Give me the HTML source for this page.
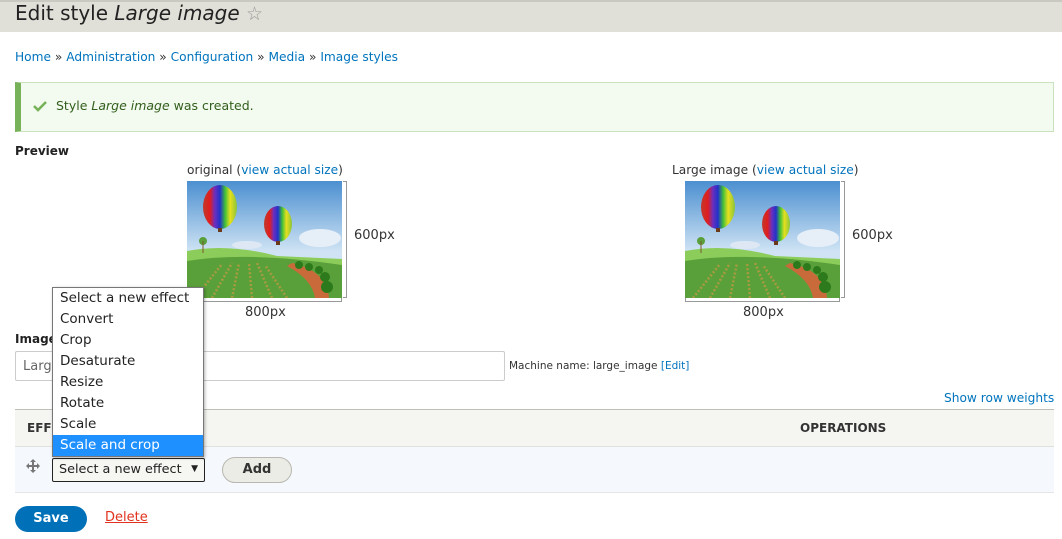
<!DOCTYPE html>
<html><head><meta charset="utf-8">
<style>
*{box-sizing:border-box;margin:0;padding:0}
body{width:1062px;height:539px;overflow:hidden;background:#fff;font-family:"DejaVu Sans","Liberation Sans",sans-serif;font-size:13px;color:#222;position:relative}
.a{position:absolute}
a,.lk{color:#0074bd;text-decoration:none}
#hdr{left:0;top:0;width:1062px;height:32px;background:#e0dfd8;border-top:2px solid #c9c9c2}
#hdr h1{position:absolute;left:15px;top:-1px;font-family:"DejaVu Sans","Liberation Sans",sans-serif;font-weight:normal;font-size:20px;color:#222;letter-spacing:0}
.img{position:absolute;width:155px;height:117px}
.dd div{height:21px;line-height:21px;padding-left:7px;font-size:13.5px;color:#222}
</style></head><body>
<div id="hdr" class="a"><h1>Edit style <i>Large image</i> <span style="color:#999;font-size:19px">☆</span></h1></div>
<div class="a" style="left:15px;top:50px;font-size:12.2px;color:#333"><a>Home</a> » <a>Administration</a> » <a>Configuration</a> » <a>Media</a> » <a>Image styles</a></div>
<div class="a" style="left:15px;top:82px;width:1039px;height:50px;background:#f3faef;border:1px solid #c9e1bd;border-left:6px solid #77b259"></div>
<svg class="a" style="left:33px;top:100px" width="14" height="12" viewBox="0 0 14 12"><path d="M1 6 L5 10 L13 2" stroke="#77b259" stroke-width="2.6" fill="none"/></svg>
<div class="a" style="left:56px;top:98px;font-size:12.5px;color:#325e1c">Style <i>Large image</i> was created.</div>
<div class="a" style="left:15px;top:144px;font-weight:bold;font-size:12px">Preview</div>

<div class="a" style="left:187px;top:163px;font-size:12.2px;color:#333">original (<a>view actual size</a>)</div>
<div class="a" style="left:672px;top:163px;font-size:12.2px;color:#333">Large image (<a>view actual size</a>)</div>

<svg width="0" height="0" style="position:absolute"><defs>
<linearGradient id="sky" x1="0" y1="0" x2="0" y2="1"><stop offset="0" stop-color="#4b8fd0"/><stop offset="0.6" stop-color="#cfe3f4"/></linearGradient>
<linearGradient id="bal" x1="0" y1="0" x2="1" y2="0"><stop offset="0" stop-color="#c0392b"/><stop offset="0.2" stop-color="#e01e1e"/><stop offset="0.35" stop-color="#6a2fc0"/><stop offset="0.5" stop-color="#2232c8"/><stop offset="0.65" stop-color="#3fbf3a"/><stop offset="0.8" stop-color="#e6e01e"/><stop offset="1" stop-color="#8ac43a"/></linearGradient>
<symbol id="pic" viewBox="0 0 155 117">
<rect width="155" height="117" fill="url(#sky)"/>
<ellipse cx="133" cy="57" rx="21" ry="9" fill="#e6eff8"/>
<ellipse cx="60" cy="64" rx="15" ry="4" fill="#dde8f4"/>
<path d="M0 70 Q40 62 90 75 L155 78 L155 117 L0 117Z" fill="#8ccc5a"/>
<path d="M0 80 Q60 70 155 84 L155 117 L0 117Z" fill="#5aa03a"/>
<path d="M105 82 Q140 90 142 117 L128 117 Q125 98 100 85Z" fill="#c96a3a"/>
<g fill="#2d7a1c"><circle cx="112" cy="84" r="4"/><circle cx="122" cy="86" r="4"/><circle cx="132" cy="89" r="4"/><circle cx="138" cy="96" r="5"/><circle cx="140" cy="106" r="6"/></g>
<g stroke="#a89a40" stroke-width="2.5" stroke-dasharray="2 2"><path d="M8 117 L35 83 M25 117 L45 82 M45 117 L52 82 M65 117 L62 82 M85 117 L70 82 M100 117 L78 84"/></g>
<ellipse cx="33" cy="26" rx="17" ry="22" fill="url(#bal)"/>
<rect x="31" y="47" width="4" height="4" fill="#6b3a1a"/>
<ellipse cx="91" cy="43" rx="14" ry="18" fill="url(#bal)"/>
<rect x="89" y="60" width="4" height="4" fill="#6b3a1a"/>
<circle cx="16" cy="60" r="4" fill="#5aa03a"/>
<line x1="16" y1="60" x2="16" y2="72" stroke="#7a5a2a"/>
</symbol></defs></svg>
<svg class="img" style="left:187px;top:181px"><use href="#pic" width="155" height="117"/></svg>
<svg class="img" style="left:685px;top:181px"><use href="#pic" width="155" height="117"/></svg>
<div class="a" style="left:343px;top:181px;width:4px;height:117px;border:1px solid #999;border-left:none"></div>
<div class="a" style="left:187px;top:298px;width:155px;height:4px;border:1px solid #999;border-top:none"></div>
<div class="a" style="left:841px;top:181px;width:4px;height:117px;border:1px solid #999;border-left:none"></div>
<div class="a" style="left:685px;top:298px;width:155px;height:4px;border:1px solid #999;border-top:none"></div>
<div class="a" style="left:354px;top:228px;font-size:13px;color:#333">600px</div>
<div class="a" style="left:852px;top:228px;font-size:13px;color:#333">600px</div>
<div class="a" style="left:245px;top:305px;font-size:13px;color:#333">800px</div>
<div class="a" style="left:743px;top:305px;font-size:13px;color:#333">800px</div>

<div class="a" style="left:15px;top:332px;font-weight:bold;font-size:12px">Image style name</div>
<div class="a" style="left:15px;top:351px;width:490px;height:30px;border:1px solid #ccc;border-radius:2px;padding:7px 7px;color:#666;font-size:13px">Large image</div>
<div class="a" style="left:509px;top:360px;font-size:10.5px;color:#333">Machine name: large_image <a>[Edit]</a></div>
<div class="a" style="left:944px;top:391px;font-size:12.2px"><a>Show row weights</a></div>
<div class="a" style="left:15px;top:409px;width:1039px;height:38px;background:#f5f5f2;border-top:1px solid #bfbfba;border-bottom:1px solid #e0e0dc"></div>
<div class="a" style="left:27px;top:421px;font-weight:bold;font-size:12px;color:#333">EFFECT</div>
<div class="a" style="left:800px;top:421px;font-weight:bold;font-size:12px;color:#333">OPERATIONS</div>
<div class="a" style="left:15px;top:447px;width:1039px;height:46px;background:#f5f9fd;border-bottom:1px solid #e6e6e6"></div>
<svg class="a" style="left:26px;top:459px" width="14" height="14" viewBox="0 0 14 14"><path d="M7 0 L10 3 H8 V6 H11 V4 L14 7 L11 10 V8 H8 V11 H10 L7 14 L4 11 H6 V8 H3 V10 L0 7 L3 4 V6 H6 V3 H4Z" fill="#777"/></svg>
<div class="a" style="left:52px;top:458px;width:153px;height:24px;border:1.5px solid #222;border-radius:2px;background:#f6f6f2;padding-left:6px;line-height:21px;font-size:12.8px;color:#222;white-space:nowrap">Select a new effect<span style="position:absolute;right:6px;top:0;font-size:9px">▼</span></div>
<div class="a" style="left:222px;top:457px;width:70px;height:26px;border:1px solid #b8b8b0;border-radius:14px;background:#ecece6;text-align:center;line-height:24px;font-weight:bold;font-size:13px;color:#333">Add</div>
<div class="a dd" style="left:52px;top:287px;width:152px;height:170px;background:#fff;border:1px solid #777;box-shadow:1px 1px 3px rgba(0,0,0,.3)">
<div>Select a new effect</div><div>Convert</div><div>Crop</div><div>Desaturate</div><div>Resize</div><div>Rotate</div><div>Scale</div><div style="background:#1e90ff;color:#fff">Scale and crop</div></div>
<div class="a" style="left:15px;top:506px;width:72px;height:26px;background:#0071b8;border-radius:14px;color:#fff;font-weight:bold;text-align:center;line-height:26px;font-size:13px">Save</div>
<div class="a" style="left:105px;top:510px;color:#e0321e;text-decoration:underline;font-size:13px">Delete</div>
</body></html>
